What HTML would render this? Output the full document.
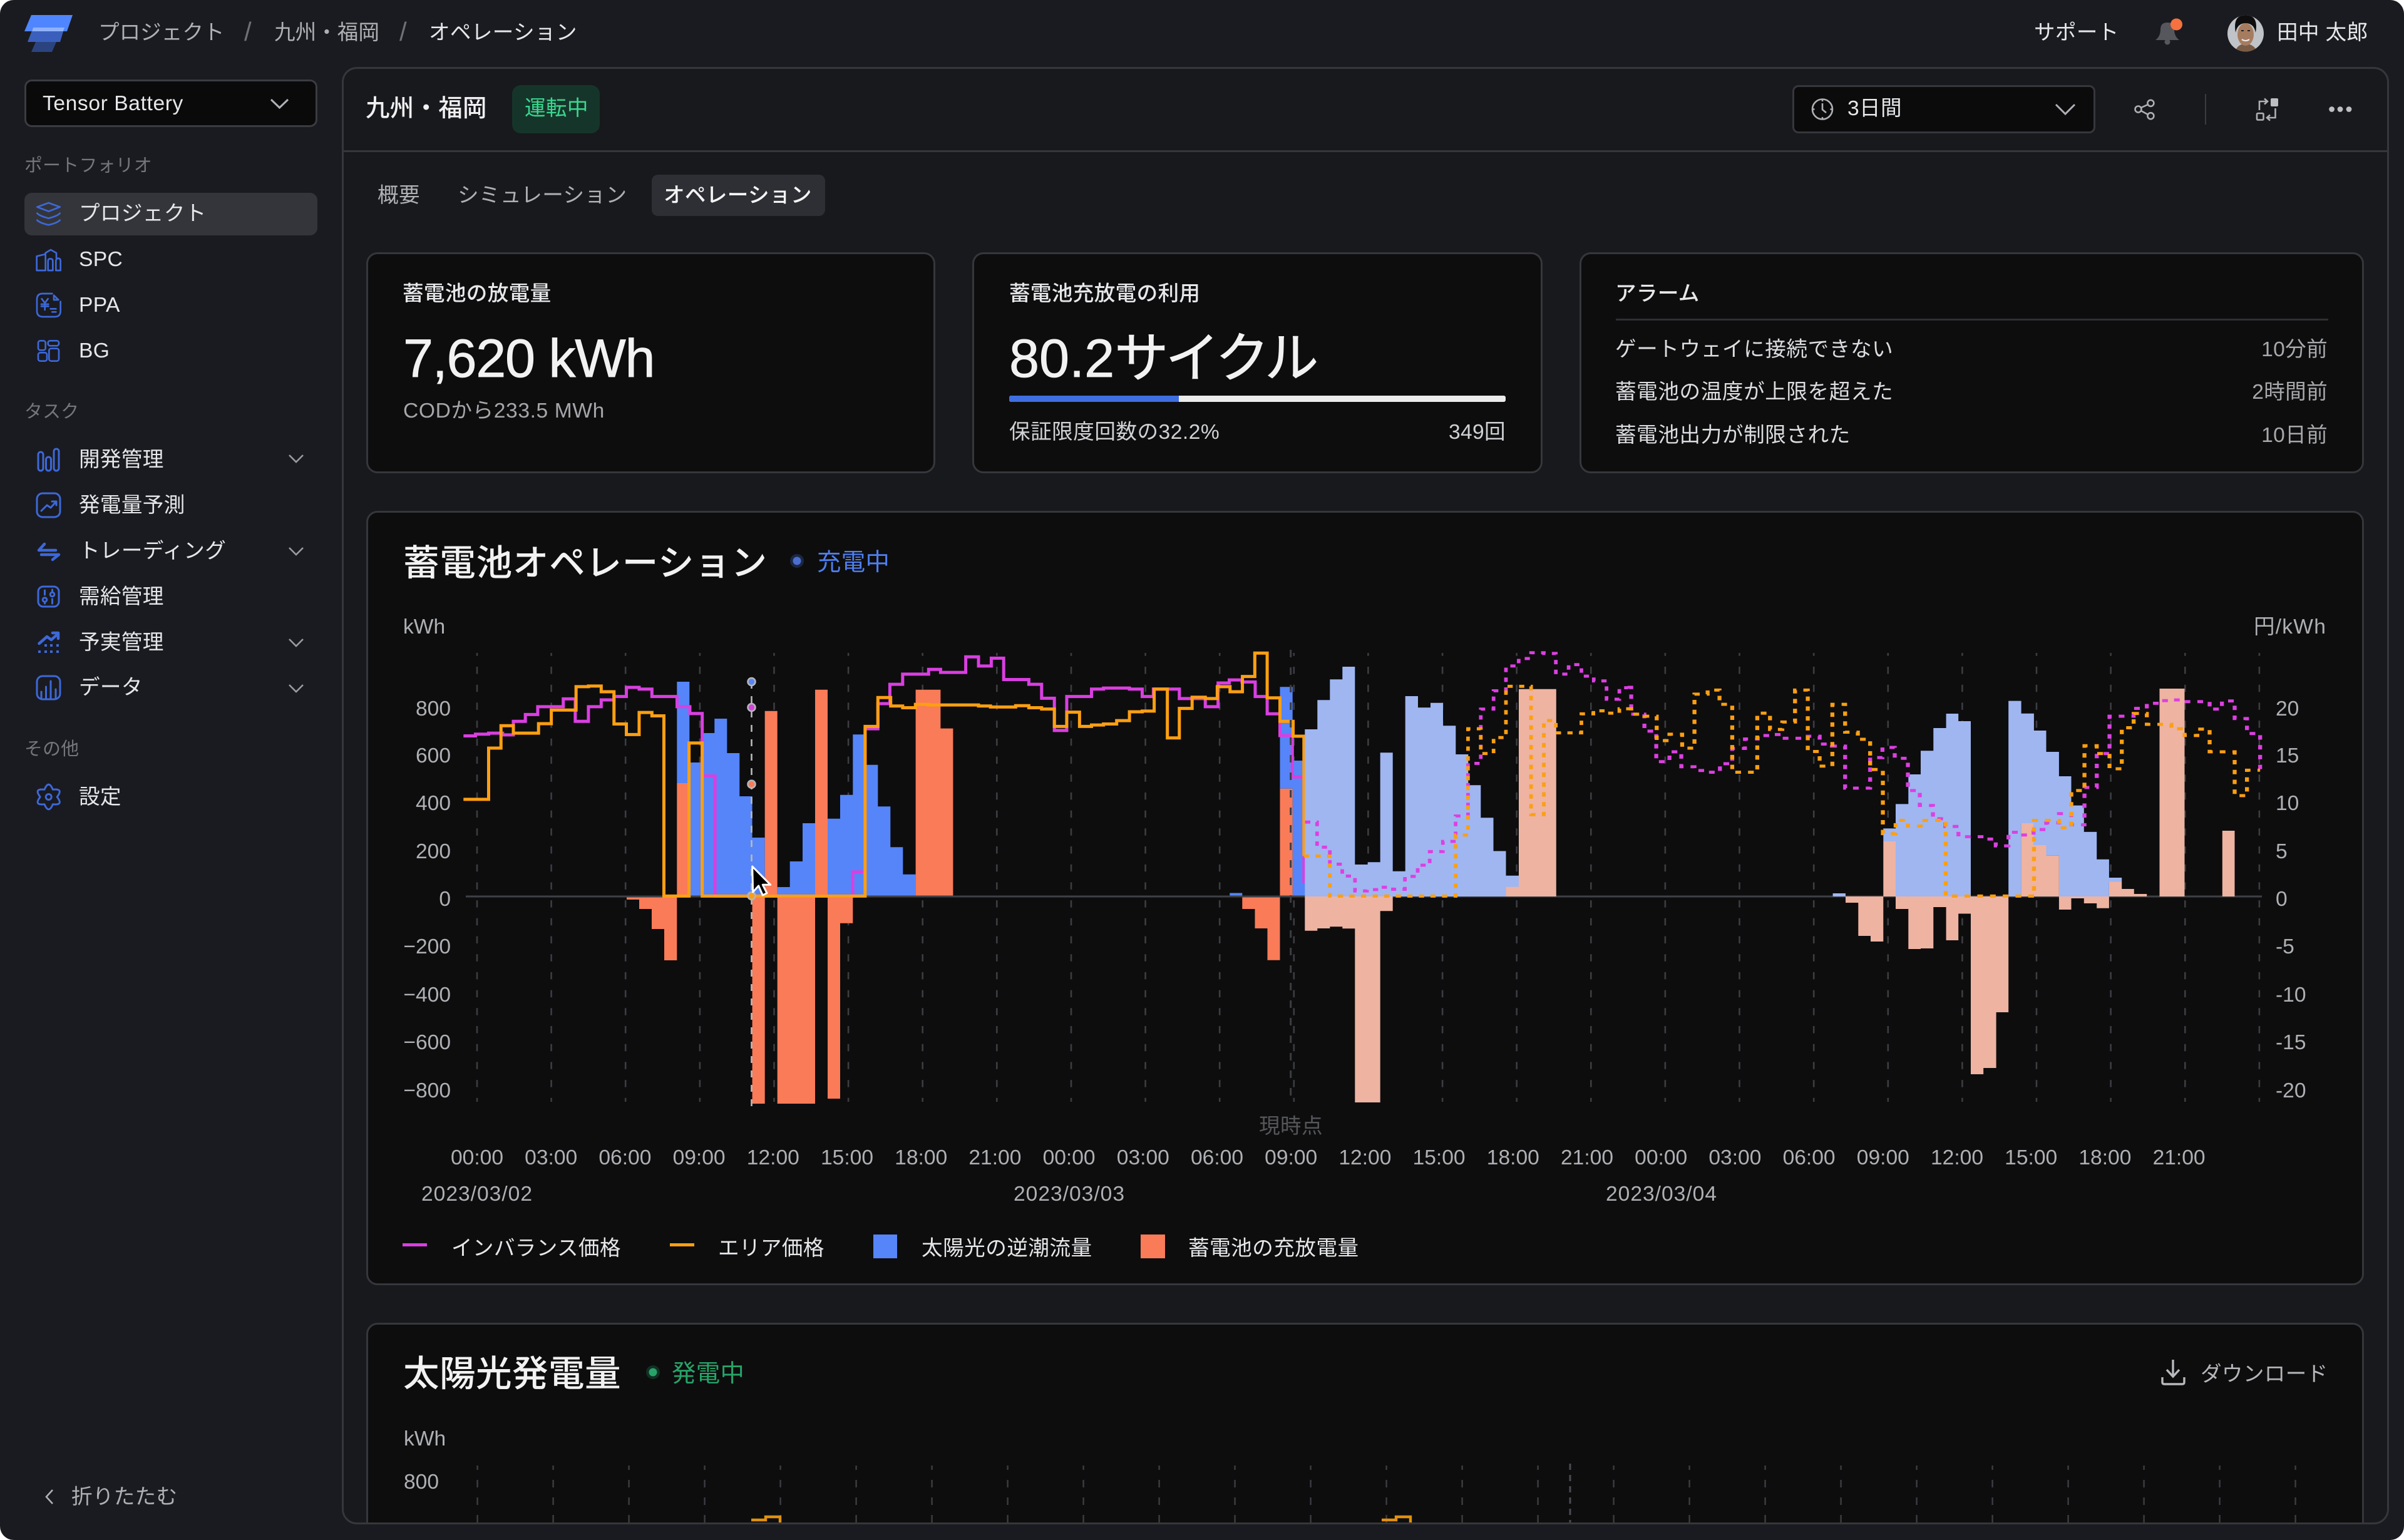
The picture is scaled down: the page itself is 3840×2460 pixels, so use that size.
<!DOCTYPE html>
<html lang="ja"><head><meta charset="utf-8"><title>Tensor Battery</title>
<style>
html,body{margin:0;padding:0;background:#fff}
body{width:3840px;height:2460px;overflow:hidden;position:relative;font-family:"Liberation Sans","Noto Sans CJK JP",sans-serif;color:#e6e7e9}
#app{position:absolute;left:0;top:0;width:3840px;height:2460px;background:#1a1b20;border-radius:22px;overflow:hidden}
.b{position:absolute;box-sizing:border-box}
.t{position:absolute;white-space:nowrap;line-height:1;font-size:33.6px;margin-top:2px;letter-spacing:.35px}
.c{transform:translateX(-50%)}
.r{transform:translateX(-100%)}
.card{background:#0d0d0e;border:3px solid #36373c;border-radius:18px}
.g{color:#aeb0b4;letter-spacing:0}
.m{font-weight:500}
svg{position:absolute;left:0;top:0;overflow:visible}
</style></head><body><div id="app">

<!-- panel -->
<div class="b" style="left:546px;top:107px;width:3270px;height:2328px;background:#18191c;border-radius:24px"></div>
<div class="b" style="left:547px;top:240px;width:3268px;height:3px;background:#36373c"></div>
<div class="b" style="left:818px;top:136px;width:140px;height:77px;background:#16352a;border-radius:14px"></div>
<div class="b" style="left:2863px;top:136px;width:484px;height:77px;background:#0b0b0c;border:3px solid #36373c;border-radius:10px"></div>
<div class="b" style="left:3522px;top:150px;width:2px;height:49px;background:#3a3b40"></div>
<div class="b" style="left:1041px;top:279px;width:277px;height:66px;background:#2e2f34;border-radius:10px"></div>

<div class="b card" style="left:585px;top:403px;width:909px;height:353px"></div>
<div class="b card" style="left:1553px;top:403px;width:911px;height:353px"></div>
<div class="b card" style="left:2523px;top:403px;width:1253px;height:353px"></div>
<div class="b" style="left:2581px;top:509px;width:1138px;height:3px;background:#2f3035"></div>
<div class="b" style="left:1612px;top:632px;width:793px;height:10px;background:#ececec;border-radius:3px"></div>
<div class="b" style="left:1612px;top:632px;width:271px;height:10px;background:#3f6ee0;border-radius:3px 0 0 3px"></div>
<div class="b card" style="left:585px;top:816px;width:3191px;height:1237px"></div>
<div class="b card" style="left:585px;top:2113px;width:3191px;height:321px;border-bottom:none;border-radius:18px 18px 0 0"></div>
<div class="b" style="left:546px;top:107px;width:3270px;height:2328px;border:3px solid #36373c;border-radius:24px;z-index:5"></div>

<!-- sidebar -->
<div class="b" style="left:39px;top:127px;width:468px;height:76px;background:#0a0a0b;border:3px solid #3b3c41;border-radius:12px"></div>
<div class="b" style="left:39px;top:308px;width:468px;height:68px;background:#34353a;border-radius:12px"></div>

<!-- top bar text -->
<div class="t g" style="left:157px;top:34px">プロジェクト</div>
<div class="t" style="left:390px;top:28px;color:#6f7075;font-size:42px">/</div>
<div class="t g" style="left:438px;top:34px">九州・福岡</div>
<div class="t" style="left:638px;top:28px;color:#6f7075;font-size:42px">/</div>
<div class="t" style="left:685px;top:34px">オペレーション</div>
<div class="t" style="left:3249px;top:34px">サポート</div>
<div class="t" style="left:3637px;top:34px">田中 太郎</div>

<!-- sidebar text -->
<div class="t" style="left:68px;top:147px;letter-spacing:.6px">Tensor Battery</div>
<div class="t" style="left:39px;top:249px;font-size:28.8px;color:#75767b">ポートフォリオ</div>
<div class="t" style="left:126px;top:323px">プロジェクト</div>
<div class="t" style="left:126px;top:396px">SPC</div>
<div class="t" style="left:126px;top:469px">PPA</div>
<div class="t" style="left:126px;top:542px">BG</div>
<div class="t" style="left:39px;top:642px;font-size:28.8px;color:#75767b">タスク</div>
<div class="t" style="left:126px;top:716px">開発管理</div>
<div class="t" style="left:126px;top:789px">発電量予測</div>
<div class="t" style="left:126px;top:862px">トレーディング</div>
<div class="t" style="left:126px;top:935px">需給管理</div>
<div class="t" style="left:126px;top:1008px">予実管理</div>
<div class="t" style="left:126px;top:1080px">データ</div>
<div class="t" style="left:39px;top:1181px;font-size:28.8px;color:#75767b">その他</div>
<div class="t" style="left:126px;top:1255px">設定</div>
<div class="t g" style="left:114px;top:2373px;letter-spacing:.3px">折りたたむ</div>

<!-- header text -->
<div class="t m" style="left:584px;top:153px;font-size:38.4px;color:#f0f0f2">九州・福岡</div>
<div class="t" style="left:838px;top:155px;color:#3ad78f">運転中</div>
<div class="t" style="left:2951px;top:155px">3日間</div>
<div class="t g" style="left:603px;top:294px;letter-spacing:.4px">概要</div>
<div class="t g" style="left:731px;top:294px;letter-spacing:.4px">シミュレーション</div>
<div class="t m" style="left:1060px;top:294px;color:#f4f4f5">オペレーション</div>

<!-- cards text -->
<div class="t m" style="left:643px;top:451px">蓄電池の放電量</div>
<div class="t" style="left:644px;top:528px;font-size:86.4px;letter-spacing:-1.3px;color:#f2f2f3;-webkit-text-stroke:.8px #f2f2f3">7,620 kWh</div>
<div class="t" style="left:644px;top:638px;color:#a5a6aa;letter-spacing:.6px">CODから233.5 MWh</div>
<div class="t m" style="left:1612px;top:451px">蓄電池充放電の利用</div>
<div class="t" style="left:1612px;top:528px;font-size:86.4px;color:#f2f2f3;letter-spacing:0;-webkit-text-stroke:.8px #f2f2f3">80.2<span style="letter-spacing:-5px">サイクル</span></div>
<div class="t" style="left:1612px;top:672px;color:#d0d1d4;letter-spacing:.5px">保証限度回数の32.2%</div>
<div class="t r" style="left:2405px;top:672px;color:#d0d1d4">349回</div>
<div class="t m" style="left:2580px;top:451px">アラーム</div>
<div class="t" style="left:2580px;top:540px;color:#dcdde0;letter-spacing:.6px">ゲートウェイに接続できない</div>
<div class="t r" style="left:3718px;top:540px;color:#a7a8ac">10分前</div>
<div class="t" style="left:2580px;top:608px;color:#dcdde0;letter-spacing:.6px">蓄電池の温度が上限を超えた</div>
<div class="t r" style="left:3718px;top:608px;color:#a7a8ac">2時間前</div>
<div class="t" style="left:2580px;top:677px;color:#dcdde0;letter-spacing:.6px">蓄電池出力が制限された</div>
<div class="t r" style="left:3718px;top:677px;color:#a7a8ac">10日前</div>

<!-- chart text -->
<div class="t m" style="left:644px;top:870px;font-size:57.6px;color:#f2f2f3;letter-spacing:.7px">蓄電池オペレーション</div>
<div class="t" style="left:1305px;top:878px;font-size:38.4px;color:#4f7fef">充電中</div>
<div class="t g" style="left:644px;top:983px">kWh</div>
<div class="t g" style="left:3600px;top:983px;letter-spacing:1.2px">円/kWh</div>
<div class="t g r" style="left:720px;top:1114px">800</div>
<div class="t g r" style="left:720px;top:1189px">600</div>
<div class="t g r" style="left:720px;top:1265px">400</div>
<div class="t g r" style="left:720px;top:1342px">200</div>
<div class="t g r" style="left:720px;top:1418px">0</div>
<div class="t g r" style="left:720px;top:1494px">−200</div>
<div class="t g r" style="left:720px;top:1571px">−400</div>
<div class="t g r" style="left:720px;top:1647px">−600</div>
<div class="t g r" style="left:720px;top:1724px">−800</div>
<div class="t g" style="left:3635px;top:1114px">20</div>
<div class="t g" style="left:3635px;top:1189px">15</div>
<div class="t g" style="left:3635px;top:1265px">10</div>
<div class="t g" style="left:3635px;top:1342px">5</div>
<div class="t g" style="left:3635px;top:1418px">0</div>
<div class="t g" style="left:3635px;top:1494px">-5</div>
<div class="t g" style="left:3635px;top:1571px">-10</div>
<div class="t g" style="left:3635px;top:1647px">-15</div>
<div class="t g" style="left:3635px;top:1724px">-20</div>
<div class="t c" style="left:2062px;top:1781px;color:#55565a">現時点</div>
<div class="t g c" style="left:762px;top:1831px">00:00</div>
<div class="t g c" style="left:880.2px;top:1831px">03:00</div>
<div class="t g c" style="left:998.4px;top:1831px">06:00</div>
<div class="t g c" style="left:1116.6px;top:1831px">09:00</div>
<div class="t g c" style="left:1234.8px;top:1831px">12:00</div>
<div class="t g c" style="left:1353px;top:1831px">15:00</div>
<div class="t g c" style="left:1471.2px;top:1831px">18:00</div>
<div class="t g c" style="left:1589.4px;top:1831px">21:00</div>
<div class="t g c" style="left:1707.6px;top:1831px">00:00</div>
<div class="t g c" style="left:1825.8px;top:1831px">03:00</div>
<div class="t g c" style="left:1944px;top:1831px">06:00</div>
<div class="t g c" style="left:2062.2px;top:1831px">09:00</div>
<div class="t g c" style="left:2180.4px;top:1831px">12:00</div>
<div class="t g c" style="left:2298.6px;top:1831px">15:00</div>
<div class="t g c" style="left:2416.8px;top:1831px">18:00</div>
<div class="t g c" style="left:2535px;top:1831px">21:00</div>
<div class="t g c" style="left:2653.2px;top:1831px">00:00</div>
<div class="t g c" style="left:2771.4px;top:1831px">03:00</div>
<div class="t g c" style="left:2889.6px;top:1831px">06:00</div>
<div class="t g c" style="left:3007.8px;top:1831px">09:00</div>
<div class="t g c" style="left:3126px;top:1831px">12:00</div>
<div class="t g c" style="left:3244.2px;top:1831px">15:00</div>
<div class="t g c" style="left:3362.4px;top:1831px">18:00</div>
<div class="t g c" style="left:3480.6px;top:1831px">21:00</div>
<div class="t g c" style="left:762px;top:1889px;letter-spacing:1px">2023/03/02</div>
<div class="t g c" style="left:1708px;top:1889px;letter-spacing:1px">2023/03/03</div>
<div class="t g c" style="left:2654px;top:1889px;letter-spacing:1px">2023/03/04</div>
<div class="t" style="left:721px;top:1976px">インバランス価格</div>
<div class="t" style="left:1147px;top:1976px">エリア価格</div>
<div class="t" style="left:1472px;top:1976px;letter-spacing:.5px">太陽光の逆潮流量</div>
<div class="t" style="left:1898px;top:1976px;letter-spacing:.5px">蓄電池の充放電量</div>

<div class="t m" style="left:644px;top:2165px;font-size:57.6px;color:#f2f2f3;letter-spacing:.4px">太陽光発電量</div>
<div class="t" style="left:1073px;top:2174px;font-size:38.4px;color:#27a468">発電中</div>
<div class="t" style="left:3515px;top:2177px;color:#b5b6ba">ダウンロード</div>
<div class="t g" style="left:645px;top:2280px">kWh</div>
<div class="t g" style="left:645px;top:2349px">800</div>

<svg width="3840" height="2460" viewBox="0 0 3840 2460" fill="none" style="z-index:3">
<!-- logo -->
<path d="M50 24H116L107 50H39Z" fill="#4f86ff"/>
<path d="M53 44H103L96 67H44Z" fill="#3b5fbd"/>
<path d="M53 44H103L101 50H51Z" fill="#8fb2ff"/>
<path d="M57 67H90L83 83H50Z" fill="#2b4480"/>
<!-- select chevrons -->
<path d="M433 159L446.5 172L460 159" stroke="#b0b2b6" stroke-width="3"/>
<g stroke="#9a9ba0" stroke-width="2.6">
<path d="M462 727L473 738L484 727"/><path d="M462 875L473 886L484 875"/><path d="M462 1021L473 1032L484 1021"/><path d="M462 1094L473 1105L484 1094"/>
</g>
<path d="M84 2380L74 2391L84 2402" stroke="#aeb0b4" stroke-width="2.6"/>
<!-- nav icons in 3x coords -->
<g stroke="#3d68d8" stroke-width="8" transform="translate(30 300) scale(.33333)" stroke-linejoin="round" stroke-linecap="round">
<path d="M143 72L197 92L143 113L88 92Z M88 122Q100 135 143 146Q186 135 197 122 M88 155Q100 168 143 178Q186 168 197 155"/>
<path d="M86 396V328L128 318V396Z M128 318V312L153 297L180 312V335 M140 396V352Q140 340 151 340Q163 340 163 352V396H140 M178 396V352Q178 338 189 338Q200 338 200 352V396H178"/>
<path d="M160 507H115Q87 507 87 535V590Q87 618 115 618H172Q200 618 200 590V545 M168 515L190 537H168Z M110 532L125 552L140 532 M108 558H142 M108 568H142 M125 552V585 M152 580H178 M160 595H178"/>
<rect x="93" y="733" width="35" height="45" rx="10"/><rect x="140" y="733" width="52" height="24" rx="10"/><rect x="93" y="790" width="42" height="40" rx="10"/><rect x="145" y="770" width="47" height="60" rx="10"/>
</g>
<g stroke="#3d68d8" stroke-width="3" stroke-linejoin="round" stroke-linecap="round">
<rect x="61" y="722" width="8" height="30" rx="4"/><rect x="73.5" y="730" width="8" height="22" rx="4"/><rect x="86" y="717" width="8" height="35" rx="4"/>
<rect x="59" y="788" width="37" height="38" rx="9"/><path d="M66 816L75 807L81 811L89 802M83 801H90V807"/>
<rect x="61" y="937" width="33" height="32" rx="8"/><path d="M71.5 943V950M83.5 942V945M83.5 957V964M71.5 962V964"/><circle cx="71.5" cy="958" r="3.3"/><circle cx="83.5" cy="949.5" r="3.3"/>
<rect x="59" y="1080" width="37" height="37" rx="9"/><path d="M66 1105V1116M73.5 1097V1116M81 1088V1116M89 1101V1116"/>
<path transform="translate(77.7 1273)" d="M-6.75 -11.7Q0 -28 6.75 -11.7Q24.25 -14 13.5 0Q24.25 14 6.75 11.7Q0 28 -6.75 11.7Q-24.25 14 -13.5 0Q-24.25 -14 -6.75 -11.7Z"/><circle cx="77.7" cy="1273" r="4.5"/>
</g>
<g stroke="#3d68d8" stroke-width="4.5" stroke-linejoin="round" stroke-linecap="round">
<path d="M62 879H89M71 869L62 879M66 886H94M94 886L84 894"/>
<path d="M62.5 1028L75 1017L82 1022L93 1012M84 1011H93V1020"/>
</g>
<g fill="#3d68d8">
<rect x="71" y="1029" width="4" height="4"/><rect x="80" y="1029" width="4" height="4"/><rect x="90" y="1029" width="4" height="4"/>
<rect x="61" y="1039" width="4" height="4"/><rect x="71" y="1039" width="4" height="4"/><rect x="80" y="1039" width="4" height="4"/><rect x="90" y="1039" width="4" height="4"/>
</g>
<!-- header icons -->
<g stroke="#aeb0b4" stroke-width="2.6">
<circle cx="2911" cy="174.5" r="16"/><path d="M2911 165V175L2917 180M2911 158.5V162M2911 187V190.5M2895 174.5H2898.5M2923.5 174.5H2927"/>
<path d="M3284 167L3299 182L3314 167" stroke-width="3"/>
<circle cx="3435.4" cy="164.8" r="5"/><circle cx="3415.5" cy="174.5" r="5"/><circle cx="3435.4" cy="185.2" r="5"/><path d="M3420 172L3431 167M3420 177L3431 183"/>
<path d="M3609 176V162H3621M3617 157.5L3622 162L3617 166.5"/><rect x="3605" y="181" width="10.5" height="10.5" rx="1.5"/>
<path d="M3634.5 173V188H3622M3626 183.5L3621 188L3626 192.5"/>
</g>
<rect x="3627" y="157" width="12" height="13" rx="2" fill="#bdbec2"/>
<g fill="#bdbec2"><circle cx="3724.6" cy="174.5" r="4.4"/><circle cx="3738" cy="174.5" r="4.4"/><circle cx="3752" cy="174.5" r="4.4"/></g>
<!-- bell -->
<path d="M3443 64Q3451 58 3451 47Q3451 36 3462 36Q3473 36 3473 47Q3473 58 3481 64Z" fill="#56575c"/><circle cx="3462" cy="67" r="4.5" fill="#56575c"/>
<circle cx="3476.5" cy="39" r="9.5" fill="#f5713f"/>
<!-- avatar -->
<clipPath id="av"><ellipse cx="3587" cy="53.5" rx="29" ry="29"/></clipPath>
<g clip-path="url(#av)">
<rect x="3558" y="24" width="58" height="59" fill="#c0c3c7"/>
<path d="M3570 83Q3574 70 3587 70Q3600 70 3606 83Z" fill="#7a5c46"/>
<ellipse cx="3587" cy="55" rx="13" ry="18" fill="#a67c60"/>
<path d="M3571 52Q3566 24 3587 24Q3608 24 3603 52Q3600 37 3587 37Q3574 37 3571 52Z" fill="#0e0e0e"/>
<path d="M3580 49H3584M3590 49H3594" stroke="#222" stroke-width="2"/>
<path d="M3581 63Q3587 67 3593 63" stroke="#eee" stroke-width="2"/>
</g>
<!-- download -->
<g stroke="#b9babe" stroke-width="3.4">
<path d="M3471 2172V2198M3461 2188L3471 2199L3481 2188"/>
<path d="M3454 2200V2208Q3454 2211 3457 2211H3486Q3489 2211 3489 2208V2200"/>
</g>
<!-- status dots -->
<circle cx="1273" cy="896" r="11" fill="#1d2740"/><circle cx="1273" cy="896" r="6.5" fill="#4a6fd0"/>
<circle cx="1043" cy="2192" r="11" fill="#123024"/><circle cx="1043" cy="2192" r="6.5" fill="#27a468"/>
<!-- legend -->
<rect x="643" y="1986" width="39" height="5" fill="#d93fe0"/>
<rect x="1070" y="1986" width="39" height="5" fill="#fc9f12"/>
<rect x="1395" y="1972" width="38" height="38" fill="#5585f8"/>
<rect x="1822" y="1972" width="39" height="38" fill="#f97b58"/>

<!-- grid -->
<path stroke="#3c3d42" stroke-width="2.6" stroke-dasharray="11.5 17.2" stroke-dashoffset="6.7" d="M762 1043V1760M880.6 1043V1760M999.2 1043V1760M1117.9 1043V1760M1236.5 1043V1760M1355.1 1043V1760M1473.7 1043V1760M1592.3 1043V1760M1711 1043V1760M1829.6 1043V1760M1948.2 1043V1760M2066.8 1043V1760M2185.4 1043V1760M2304.1 1043V1760M2422.7 1043V1760M2541.3 1043V1760M2659.9 1043V1760M2778.5 1043V1760M2897.2 1043V1760M3015.8 1043V1760M3134.4 1043V1760M3253 1043V1760M3371.6 1043V1760M3490.3 1043V1760M3608.9 1043V1760"/>
<!-- solid bars -->
<path fill="#5585f8" d="M1081.3 1089H1101.3V1251H1081.3ZM1101.3 1218H1121.5V1432H1101.3ZM1121.5 1171H1141.3V1432H1121.5ZM1141.3 1148H1161.3V1432H1141.3ZM1161.3 1203H1181.3V1432H1161.3ZM1181.3 1272H1201.6V1432H1181.3ZM1201.6 1338H1221.7V1432H1201.6ZM1241.7 1417H1261.7V1432H1241.7ZM1261.7 1376H1282V1432H1261.7ZM1282 1315H1302V1432H1282ZM1322 1307.7H1342V1432H1322ZM1342 1269.7H1362.3V1432H1342ZM1362.3 1173.3H1382.3V1432H1362.3ZM1382.3 1221.7H1402.3V1432H1382.3ZM1402.3 1288.3H1422.3V1432H1402.3ZM1422.3 1353.3H1442.3V1432H1422.3ZM1442.3 1396.7H1462.6V1432H1442.3ZM1964.3 1426.5H1984.3V1432H1964.3ZM2044.5 1097.3H2064.7V1259.7H2044.5ZM2064.7 1215H2084.5V1432H2064.7Z"/>
<path fill="#f97b58" d="M1081.3 1251H1101.3V1432H1081.3ZM1221.7 1135.7H1241.7V1432H1221.7ZM1302 1101.7H1322V1432H1302ZM1462.6 1101.7H1502.4V1432H1462.6ZM1502.4 1163.6H1522.4V1432H1502.4ZM2044.5 1259.7H2064.7V1432H2044.5ZM1001 1432H1021V1437H1001ZM1021 1432H1041V1452H1021ZM1041 1432H1061V1484H1041ZM1061 1432H1081.3V1534H1061ZM1201.6 1432H1221.7V1763H1201.6ZM1241.7 1432H1302V1763H1241.7ZM1322 1432H1342V1755H1322ZM1342 1432H1362.3V1474.7H1342ZM1984.3 1432H2004.5V1452H1984.3ZM2004.5 1432H2024.5V1483H2004.5ZM2024.5 1432H2044.5V1533.7H2024.5Z"/>
<path stroke="#3f4045" stroke-width="3" d="M744 1432H3613"/>
<!-- solid lines -->
<g stroke-width="5" stroke-linejoin="miter">
<g stroke="#d93fe0">
<path vector-effect="non-scaling-stroke" transform="translate(600 950) scale(.63776 .54209)" d="M220 416H250V411H283V408H318V413H345V373H375V353H406V330H470V307H500V373H533V330H565V310H597V300H628V273H660V278H692V300H755V330H787V350H818V534H850V888H1195V817H1226V395H1258V321H1288V264H1320V234H1385V220H1415V229H1478V183H1510V210H1542V187H1568"/>
<path vector-effect="non-scaling-stroke" transform="translate(1600 950) scale(.63776 .54209)" d="M0 187H5V250H68V264H100V305H132V400H163V300H225V278H255V275H320V278H352V300H380V278H445V306H510V330H542V260H570V251H602V257H635V300H665V351H697V415H728V537H757V850"/>
</g>
<g stroke="#fc9f12">
<path vector-effect="non-scaling-stroke" transform="translate(600 950) scale(.63776 .54209)" d="M220 603H283V452H314V386H345V408H408V380H440V340H502V271H533V269H565V286H597V381H628V412H660V347H692V357H722V888H785V437H818V888H1226V388H1258V303H1290V328H1320V333H1352V323H1385V325H1510V328H1540V331H1568"/>
<path vector-effect="non-scaling-stroke" transform="translate(1600 950) scale(.63776 .54209)" d="M0 331H35V327H68V333H100V337H132V388H163V346H195V388H225V384H255V381H288V371H320V345H352V343H382V278H415V422H445V335H477V302H510V306H540V271H572V286H603V241H634V172H665V304H697V373H730V417H757V770"/>
</g>
</g>
<!-- pale bars -->
<path fill="#9fb6f1" d="M2084.3 1165H2104.3V1432H2084.3ZM2104.3 1118.3H2124.3V1432H2104.3ZM2124.3 1085.3H2144.3V1432H2124.3ZM2144.3 1065H2164.3V1432H2144.3ZM2164.3 1381H2184.7V1432H2164.3ZM2184.7 1377.3H2204.7V1432H2184.7ZM2204.7 1202.3H2224.7V1432H2204.7ZM2224.7 1391.7H2244.7V1432H2224.7ZM2244.7 1112H2265V1432H2244.7ZM2265 1130.3H2285V1432H2265ZM2285 1122.7H2305V1432H2285ZM2305 1159.3H2325.3V1432H2305ZM2325.3 1205H2345.3V1432H2325.3ZM2345.3 1254.3H2365.3V1432H2345.3ZM2365.3 1306.3H2385.5V1432H2365.3ZM2385.5 1359.5H2405.5V1432H2385.5ZM2405.5 1398.8H2426V1432H2405.5ZM2927.6 1427H2948V1432H2927.6ZM3008.3 1323.4H3028V1344H3008.3ZM3028 1284.4H3048.3V1432H3028ZM3048.3 1237H3068V1432H3048.3ZM3068 1199.3H3088.3V1432H3068ZM3088.3 1163H3108.6V1432H3088.3ZM3108.6 1140H3128.2V1432H3108.6ZM3128.2 1152H3148V1432H3128.2ZM3208.2 1119.6H3228.6V1432H3208.2ZM3228.6 1139.7H3248.9V1315H3228.6ZM3248.9 1167H3268.5V1350H3248.9ZM3268.5 1201H3288.9V1366.8H3268.5ZM3288.9 1240H3308.5V1432H3288.9ZM3308.5 1286.6H3328.8V1432H3308.5ZM3328.8 1328.9H3349.2V1432H3328.8ZM3349.2 1372.8H3368.9V1432H3349.2ZM3368.9 1402H3389.2V1408.5H3368.9Z"/>
<path fill="#eeb3a1" d="M2405.5 1416.7H2426V1432H2405.5ZM2426 1100.7H2485.8V1432H2426ZM2084.3 1432H2104.3V1486.7H2084.3ZM2104.3 1432H2124.3V1483H2104.3ZM2124.3 1432H2144.3V1480.3H2124.3ZM2144.3 1432H2164.3V1483.3H2144.3ZM2164.3 1432H2204.7V1761H2164.3ZM2204.7 1432H2224.7V1455.3H2204.7ZM2948 1432H2968.3V1442H2948ZM2968.3 1432H2988V1495H2968.3ZM2988 1432H3008.3V1504H2988ZM3008.3 1344H3028V1432H3008.3ZM3028 1432H3048.3V1452H3028ZM3048.3 1432H3068V1516H3048.3ZM3068 1432H3088.3V1515H3068ZM3088.3 1432H3108.6V1449H3088.3ZM3108.6 1432H3128.2V1502H3108.6ZM3128.2 1432H3148V1459.5H3128.2ZM3148 1432H3168.2V1716H3148ZM3168.2 1432H3188.6V1706H3168.2ZM3188.6 1432H3208.2V1617H3188.6ZM3228.6 1315H3248.9V1432H3228.6ZM3248.9 1350H3268.5V1432H3248.9ZM3268.5 1366.8H3288.9V1432H3268.5ZM3288.9 1432H3308.5V1453H3288.9ZM3308.5 1432H3328.8V1435H3308.5ZM3328.8 1432H3349.2V1443H3328.8ZM3349.2 1432H3368.9V1450.8H3349.2ZM3368.9 1408.5H3389.2V1432H3368.9ZM3389.2 1420H3408.8V1432H3389.2ZM3408.8 1428H3429.2V1432H3408.8ZM3449.5 1100H3489.5V1432H3449.5ZM3549.8 1327H3569.5V1432H3549.8Z"/>
<!-- dashed future lines -->
<g stroke-width="9" stroke-dasharray="13 16">
<g stroke="#dd3fe2">
<path transform="translate(1600 950) scale(.63776 .54209)" d="M760 670H790V744H822V794H853V829H885V873H915V869H947V862H980V868H1010V830H1042V797H1072V757H1105V727H1137V652H1168V497H1200V337H1232V283H1263V210H1295V188H1326V171H1358V173H1388V234H1420V206H1452V240H1483V254H1515V308H1547V274H1568"/>
<path transform="translate(2600 950) scale(.70153 .54209)" d="M0 273H8V352H38V402H65V492H95V463H122V507H152V518H182V523H210V498H238V453H267V425H296V415H325V412H353V423H410V417H437V440H465V446H495V570H552V480H580V450H608V482H638V577H665V621H695V660H723V683H753V713H810V720H838V740H867V700H896V708H924V692H953V672H982V645H1010V678H1040V568H1068V468H1097V358H1152V335H1182V320H1210V312H1240V310H1268V315H1325V337H1353V313H1382V365H1410V409H1440V517"/>
</g>
<g stroke="#fc9f12">
<path transform="translate(1600 950) scale(.63776 .54209)" d="M757 770H822V888H1137V708H1168V395H1200V468H1232V421H1263V270H1326V648H1358V371H1388V407H1452V351H1482V342H1515V349H1547V336H1568"/>
<path transform="translate(2600 950) scale(.70153 .54209)" d="M0 336H8V352H38V358H66V430H95V411H124V452H152V293H182V281H209V323H238V523H295V349H324V397H352V375H381V281H410V462H437V505H466V323H495V405H524V426H552V515H581V704H610V665H638V682H667V665H724V888H925V665H982V687H1010V577H1040V445H1068V468H1097V513H1125V392H1152V350H1182V382H1238V395H1268V415H1297V396H1325V463H1382V592H1410V517H1440"/>
</g>
</g>
<!-- now line -->
<path stroke="#3c3d42" stroke-width="3" stroke-dasharray="12 16" d="M2061.7 1038V1766"/>
<!-- hover -->
<path stroke="#b9babd" stroke-width="2.6" stroke-dasharray="11 12" d="M1200.5 1089V1776"/>
<g stroke="#b5b6ba" stroke-width="2.6">
<circle cx="1200.5" cy="1089" r="6" fill="#5585f8"/>
<circle cx="1200.5" cy="1130" r="6" fill="#d93fe0"/>
<circle cx="1200.5" cy="1252.7" r="6" fill="#f97b58"/>
<circle cx="1200.5" cy="1431" r="6" fill="#fc9f12"/>
</g>
<path d="M1201.7 1384L1202.7 1425L1211.7 1415L1218.3 1430L1225 1426.7L1218.3 1413.3L1230.7 1413.3Z" fill="#000" stroke="#fff" stroke-width="3" stroke-linejoin="round"/>

<!-- second chart -->
<path stroke="#3c3d42" stroke-width="2.4" stroke-dasharray="12 16" stroke-dashoffset="5" d="M762.6 2341V2432M883.6 2341V2432M1004.6 2341V2432M1125.6 2341V2432M1246.6 2341V2432M1367.6 2341V2432M1488.6 2341V2432M1609.6 2341V2432M1730.6 2341V2432M1851.6 2341V2432M1972.6 2341V2432M2093.6 2341V2432M2214.6 2341V2432M2335.6 2341V2432M2456.6 2341V2432M2577.6 2341V2432M2698.6 2341V2432M2819.6 2341V2432M2940.6 2341V2432M3061.6 2341V2432M3182.6 2341V2432M3303.6 2341V2432M3424.6 2341V2432M3545.6 2341V2432M3666.6 2341V2432"/>
<path stroke="#4a4b50" stroke-width="3" stroke-dasharray="10 8" d="M2508 2338V2432"/>
<g stroke="#e0900f" stroke-width="4.4">
<path d="M1200 2428H1223V2423H1246V2432"/>
<path d="M2207 2428H2230V2423H2253V2432"/>
</g>
</svg>
</div></body></html>
